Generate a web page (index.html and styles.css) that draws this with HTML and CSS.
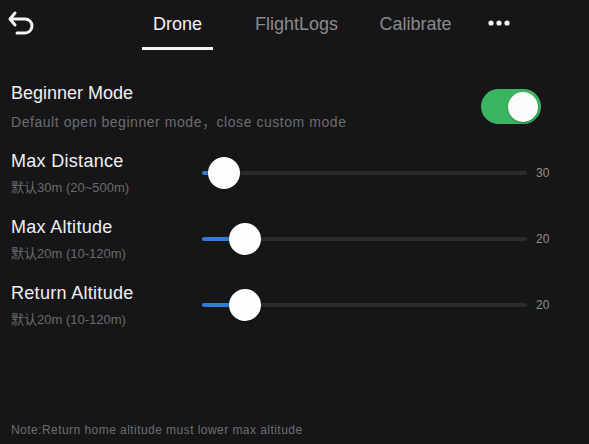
FILE: index.html
```html
<!DOCTYPE html>
<html lang="en">
<head>
<meta charset="utf-8">
<title>Drone Settings</title>
<link rel="stylesheet" href="styles.css">
</head>
<body>
<div class="app">
  <header class="header">
    <svg class="back" width="28" height="28" viewBox="6 8 28 28" aria-label="Back">
      <path d="M15 13 L10 19 L15 25 M10 19 H25 A7 7 0 0 1 25 33 H17" fill="none" stroke="#f4f4f4" stroke-width="3" stroke-linecap="round" stroke-linejoin="round"/>
    </svg>
    <nav class="tabs">
      <div class="tab active"><span class="tab-label">Drone</span></div>
      <div class="tab"><span class="tab-label">FlightLogs</span></div>
      <div class="tab"><span class="tab-label">Calibrate</span></div>
      <div class="tab more">
        <svg width="22" height="6" viewBox="0 0 22 6"><circle cx="3" cy="3" r="2.6" fill="#f4f4f4"/><circle cx="11" cy="3" r="2.6" fill="#f4f4f4"/><circle cx="19" cy="3" r="2.6" fill="#f4f4f4"/></svg>
      </div>
    </nav>
  </header>

  <main class="content">
    <section class="switch-row">
      <div class="labels">
        <div class="title">Beginner Mode</div>
        <div class="desc">Default open beginner mode，close custom mode</div>
      </div>
      <div class="toggle on"><span class="knob"></span></div>
    </section>

    <section class="slider-row">
      <div class="labels">
        <div class="title">Max Distance</div>
        <div class="sub">默认30m (20~500m)</div>
      </div>
      <div class="slider" style="--p:0.0208">
        <div class="track"></div>
        <div class="fill"></div>
        <div class="thumb"></div>
      </div>
      <div class="value">30</div>
    </section>

    <section class="slider-row">
      <div class="labels">
        <div class="title">Max Altitude</div>
        <div class="sub">默认20m (10-120m)</div>
      </div>
      <div class="slider" style="--p:0.0909">
        <div class="track"></div>
        <div class="fill"></div>
        <div class="thumb"></div>
      </div>
      <div class="value">20</div>
    </section>

    <section class="slider-row">
      <div class="labels">
        <div class="title">Return Altitude</div>
        <div class="sub">默认20m (10-120m)</div>
      </div>
      <div class="slider" style="--p:0.0909">
        <div class="track"></div>
        <div class="fill"></div>
        <div class="thumb"></div>
      </div>
      <div class="value">20</div>
    </section>
  </main>

  <footer class="note">Note:Return home altitude must lower max altitude</footer>
</div>
</body>
</html>
```

FILE: styles.css
```css
html, body {
  margin: 0;
  padding: 0;
  background: #161618;
}

body {
  font-family: "Liberation Sans", "Noto Sans CJK SC", sans-serif;
  color: #efefef;
}

.app {
  width: 589px;
  height: 444px;
  display: flex;
  flex-direction: column;
  overflow: hidden;
}

.header {
  height: 50px;
  display: flex;
  align-items: flex-start;
}

.back {
  margin-left: 6px;
  margin-top: 8px;
  flex: none;
}

.tabs {
  display: flex;
  margin-left: 84px;
}

.tab {
  width: 119px;
  padding-top: 13px;
  text-align: center;
  font-size: 18px;
  line-height: 22px;
  color: #8a8a8c;
}

.tab-label {
  display: inline-block;
  padding: 0 11px 12px;
  border-bottom: 3px solid transparent;
}

.tab.active {
  color: #f4f4f4;
}

.tab.active .tab-label {
  border-bottom-color: #f4f4f4;
}

.tab.more {
  width: 48px;
  padding-top: 20px;
  line-height: 0;
}

.content {
  padding-left: 11px;
  margin-top: 32px;
}

.title {
  font-size: 18px;
  line-height: 22px;
  letter-spacing: 0.3px;
  color: #f0f0f0;
}

.switch-row {
  display: flex;
  align-items: center;
  justify-content: space-between;
  padding-right: 48px;
}

.switch-row .title {
  letter-spacing: 0;
}

.desc {
  margin-top: 9px;
  font-size: 14px;
  line-height: 18px;
  letter-spacing: 0.55px;
  color: #6c6c6e;
}

.toggle {
  width: 60px;
  height: 35px;
  border-radius: 18px;
  background: #3bb461;
  display: flex;
  align-items: center;
  justify-content: flex-end;
  padding: 0 3px;
  box-sizing: border-box;
}

.knob {
  width: 30px;
  height: 30px;
  border-radius: 50%;
  background: #fbfbfb;
  box-shadow: 0 1px 2px rgba(0,0,0,0.3);
}

.slider-row {
  display: flex;
  align-items: center;
  height: 46px;
  margin-top: 20px;
}

.switch-row + .slider-row {
  margin-top: 19px;
}

.slider-row .labels {
  width: 191px;
  flex: none;
}

.sub {
  margin-top: 8px;
  font-size: 13px;
  line-height: 16px;
  color: #6a6a6c;
}

.slider {
  position: relative;
  width: 325px;
  height: 32px;
  flex: none;
  display: flex;
  align-items: center;
}

.track {
  width: 100%;
  height: 4px;
  border-radius: 2px;
  background: #2b2b2d;
}

.fill {
  position: absolute;
  left: 0;
  top: 14px;
  height: 4px;
  border-radius: 2px;
  width: calc(var(--p) * (100% - 32px) + 16px);
  background: #2f7dd6;
}

.thumb {
  position: absolute;
  top: 0;
  left: calc(var(--p) * (100% - 32px));
  width: 32px;
  height: 32px;
  border-radius: 50%;
  background: #fdfdfd;
  box-shadow: 0 1px 3px rgba(0,0,0,0.35);
}

.value {
  margin-left: 9px;
  font-size: 12px;
  color: #8e8e90;
}

.note {
  margin-top: auto;
  padding: 0 0 6px 11px;
  font-size: 12px;
  line-height: 16px;
  letter-spacing: 0.45px;
  color: #6e6e70;
}
```
